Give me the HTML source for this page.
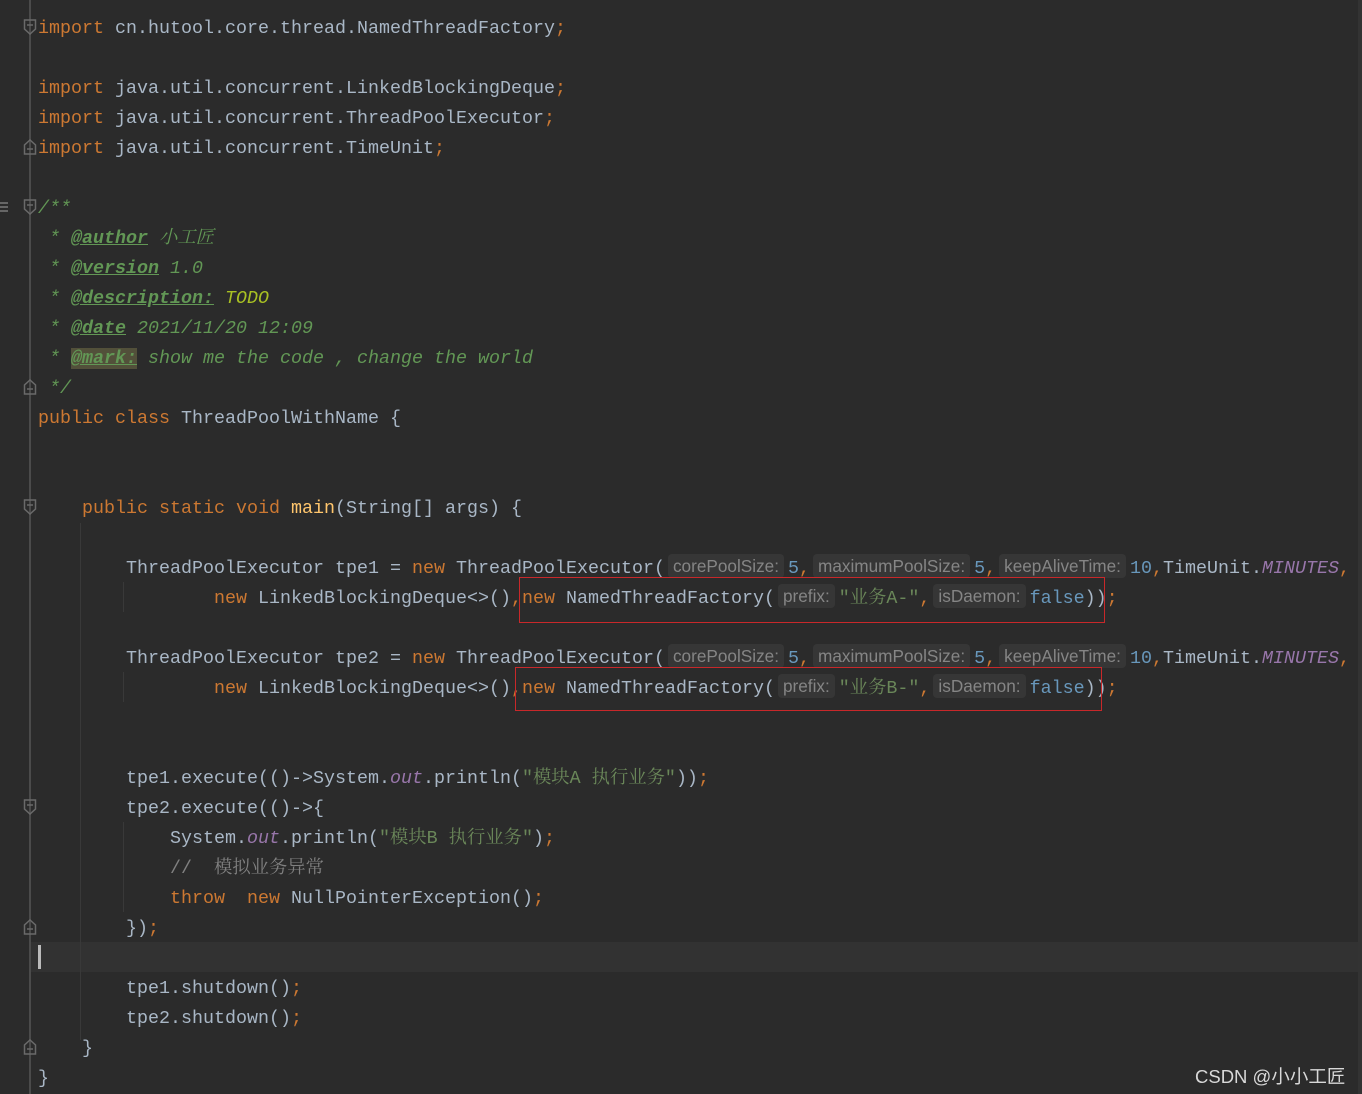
<!DOCTYPE html>
<html><head><meta charset="utf-8"><style>
*{margin:0;padding:0}
body{width:1362px;height:1094px;background:#2b2b2b;position:relative;overflow:hidden;font-family:"Liberation Mono","Noto Serif CJK SC",monospace;font-size:18.33px;color:#a9b7c6}
.l{position:absolute;height:30px;line-height:30px;white-space:pre}
.k{color:#cc7832}.s{color:#6a8759}.n{color:#6897bb}.f{color:#9876aa;font-style:italic}.m{color:#ffc66d}
.d{color:#629755;font-style:italic}.t{text-decoration:underline;font-weight:bold}.c{color:#808080}
.h{display:inline-block;font-family:"Liberation Sans",sans-serif;font-size:17.2px;color:#858585;background:#363636;border-radius:4px;padding:0 5px;line-height:24px;margin:0 4px 0 3px;vertical-align:1px}
.g{position:absolute;left:29px;top:0;width:2px;height:1094px;background:#4b4b4b}
.ig{position:absolute;width:1px;background:#393939}
.box{position:absolute;border:1.5px solid #c8282a}
</style></head><body>
<div style="position:absolute;left:30px;top:942px;width:1332px;height:30px;background:#323232"></div>
<div style="position:absolute;right:0;top:0;width:4px;height:1094px;background:#333"></div>
<div class="g"></div>
<div class="ig" style="left:80px;top:523px;height:517px"></div>
<div class="ig" style="left:123px;top:582px;height:30px"></div>
<div class="ig" style="left:123px;top:672px;height:30px"></div>
<div class="ig" style="left:123px;top:822px;height:90px"></div>
<div style="position:absolute;left:38px;top:945px;width:3px;height:24px;background:#bbb"></div>
<div style="position:absolute;left:0;top:202px;width:8px;height:2px;background:#666;box-shadow:0 4px #666,0 8px #666"></div>
<svg style="position:absolute;left:0;top:0" width="40" height="1094">
<g fill="none" stroke="#6a6a6a" stroke-width="1.5">
<path d="M24.5 20h11v9l-5.5 5l-5.5-5z M27 25h6"/>
<path d="M24.5 154h11v-9l-5.5-5l-5.5 5z M27 149h6"/>
<path d="M24.5 200h11v9l-5.5 5l-5.5-5z M27 205h6"/>
<path d="M24.5 394h11v-9l-5.5-5l-5.5 5z M27 389h6"/>
<path d="M24.5 500h11v9l-5.5 5l-5.5-5z M27 505h6"/>
<path d="M24.5 800h11v9l-5.5 5l-5.5-5z M27 805h6"/>
<path d="M24.5 934h11v-9l-5.5-5l-5.5 5z M27 929h6"/>
<path d="M24.5 1054h11v-9l-5.5-5l-5.5 5z M27 1049h6"/>
</g></svg>
<div class="l" style="left:38px;top:14px"><span class="k">import</span> cn.hutool.core.thread.NamedThreadFactory<span class="k">;</span></div>
<div class="l" style="left:38px;top:74px"><span class="k">import</span> java.util.concurrent.LinkedBlockingDeque<span class="k">;</span></div>
<div class="l" style="left:38px;top:104px"><span class="k">import</span> java.util.concurrent.ThreadPoolExecutor<span class="k">;</span></div>
<div class="l" style="left:38px;top:134px"><span class="k">import</span> java.util.concurrent.TimeUnit<span class="k">;</span></div>
<div class="l d" style="left:38px;top:194px">/**</div>
<div class="l d" style="left:38px;top:224px"> * <span class="t">@author</span> 小工匠</div>
<div class="l d" style="left:38px;top:254px"> * <span class="t">@version</span> 1.0</div>
<div class="l d" style="left:38px;top:284px"> * <span class="t">@description:</span> <span style="color:#a8c023">TODO</span></div>
<div class="l d" style="left:38px;top:314px"> * <span class="t">@date</span> 2021/11/20 12:09</div>
<div class="l d" style="left:38px;top:344px"> * <span class="t" style="background:#52503a">@mark:</span> show me the code , change the world</div>
<div class="l d" style="left:38px;top:374px"> */</div>
<div class="l" style="left:38px;top:404px"><span class="k">public class</span> ThreadPoolWithName {</div>
<div class="l" style="left:82px;top:494px"><span class="k">public static void</span> <span class="m">main</span>(String[] args) {</div>
<div class="l" style="left:126px;top:554px">ThreadPoolExecutor tpe1 = <span class="k">new</span> ThreadPoolExecutor(<span class="h">corePoolSize:</span><span class="n">5</span><span class="k">,</span><span class="h">maximumPoolSize:</span><span class="n">5</span><span class="k">,</span><span class="h">keepAliveTime:</span><span class="n">10</span><span class="k">,</span>TimeUnit.<span class="f">MINUTES</span><span class="k">,</span></div>
<div class="l" style="left:214px;top:584px"><span class="k">new</span> LinkedBlockingDeque&lt;&gt;()<span class="k">,new</span> NamedThreadFactory(<span class="h">prefix:</span><span class="s">"业务A-"</span><span class="k">,</span><span class="h">isDaemon:</span><span class="n">false</span>))<span class="k">;</span></div>
<div class="l" style="left:126px;top:644px">ThreadPoolExecutor tpe2 = <span class="k">new</span> ThreadPoolExecutor(<span class="h">corePoolSize:</span><span class="n">5</span><span class="k">,</span><span class="h">maximumPoolSize:</span><span class="n">5</span><span class="k">,</span><span class="h">keepAliveTime:</span><span class="n">10</span><span class="k">,</span>TimeUnit.<span class="f">MINUTES</span><span class="k">,</span></div>
<div class="l" style="left:214px;top:674px"><span class="k">new</span> LinkedBlockingDeque&lt;&gt;()<span class="k">,new</span> NamedThreadFactory(<span class="h">prefix:</span><span class="s">"业务B-"</span><span class="k">,</span><span class="h">isDaemon:</span><span class="n">false</span>))<span class="k">;</span></div>
<div class="box" style="left:519px;top:577px;width:584px;height:44px"></div>
<div class="box" style="left:515px;top:667px;width:585px;height:42px"></div>
<div class="l" style="left:126px;top:764px">tpe1.execute(()-&gt;System.<span class="f">out</span>.println(<span class="s">"模块A 执行业务"</span>))<span class="k">;</span></div>
<div class="l" style="left:126px;top:794px">tpe2.execute(()-&gt;{</div>
<div class="l" style="left:170px;top:824px">System.<span class="f">out</span>.println(<span class="s">"模块B 执行业务"</span>)<span class="k">;</span></div>
<div class="l c" style="left:170px;top:854px">//  模拟业务异常</div>
<div class="l" style="left:170px;top:884px"><span class="k">throw  new</span> NullPointerException()<span class="k">;</span></div>
<div class="l" style="left:126px;top:914px">})<span class="k">;</span></div>
<div class="l" style="left:126px;top:974px">tpe1.shutdown()<span class="k">;</span></div>
<div class="l" style="left:126px;top:1004px">tpe2.shutdown()<span class="k">;</span></div>
<div class="l" style="left:82px;top:1034px">}</div>
<div class="l" style="left:38px;top:1064px">}</div>
<div style="position:absolute;left:1195px;top:1063px;font-family:'Liberation Sans','Noto Sans CJK SC',sans-serif;font-size:18.5px;color:#d8d8d8">CSDN @小小工匠</div>
</body></html>
